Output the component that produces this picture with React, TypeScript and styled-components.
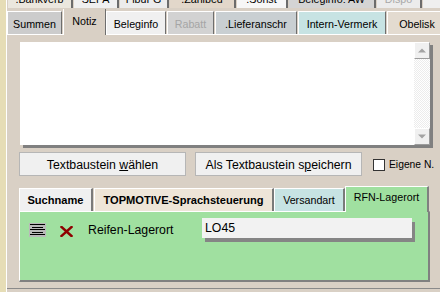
import React from "react";
import styled, { createGlobalStyle } from "styled-components";

type TabDef = {
  label: string;
  width: number;
  bg: string;
  gap?: number;
  selected?: boolean;
  disabled?: boolean;
};

const topTabs: TabDef[] = [
  { label: ".Bankverb", width: 65, bg: "#ebe7de" },
  { label: "SEPA", width: 45, bg: "#f0f0f0" },
  { label: "FibuFG", width: 49, bg: "#ececec" },
  { label: ".Zahlbed", width: 66, bg: "#e2d7ca" },
  { label: ".Sonst", width: 51, bg: "#f7f7f7" },
  { label: "Beleginfo: AW", width: 87, bg: "#d4d4d4" },
  { label: "Dispo", width: 45, bg: "#ececec", disabled: true },
  { label: "", width: 40, bg: "#efefef" },
];

const mainTabs: TabDef[] = [
  { label: "Summen", width: 55, bg: "#cccccc", gap: 1 },
  { label: "Notiz", width: 43, bg: "#d9d0c5", selected: true, gap: 0 },
  { label: "Beleginfo", width: 60, bg: "#f0f0f0", gap: 1 },
  { label: "Rabatt", width: 47, bg: "#d2d2d2", disabled: true, gap: 1 },
  { label: ".Lieferanschr", width: 82, bg: "#c9cfd2", gap: 1 },
  { label: "Intern-Vermerk", width: 88, bg: "#c7e3e3", gap: 1 },
  { label: "Obelisk", width: 60, bg: "#e3dbd0", gap: 0 },
];

const subTabs: (TabDef & { bold?: boolean })[] = [
  { label: "Suchname", width: 74, bg: "#f0f0f0", bold: true, gap: 1 },
  { label: "TOPMOTIVE-Sprachsteuerung", width: 180, bg: "#eee5d8", bold: true, gap: 0 },
  { label: "Versandart", width: 71, bg: "#c7e3e3", gap: 0 },
  { label: "RFN-Lagerort", width: 84, bg: "#a0e0a0", selected: true, gap: 0 },
];

export default function App() {
  return (
    <>
      <GlobalStyle />
      <SRoot>
        <SStrip />
        <SMain>
          <STopRow>
            {topTabs.map((t, i) => (
              <STopTab key={i} $w={t.width} $bg={t.bg} $disabled={t.disabled}>
                {t.label}
              </STopTab>
            ))}
          </STopRow>

          <STabRow>
            {mainTabs.map(t => (
              <STab
                key={t.label}
                $w={t.width}
                $bg={t.bg}
                $gap={t.gap ?? 1}
                $selected={t.selected}
                $disabled={t.disabled}
              >
                {t.label}
              </STab>
            ))}
          </STabRow>

          <SPanel>
            <SNoteBox>
              <SScrollBar>
                <SScrollBtn>
                  <svg width="8" height="5" viewBox="0 0 8 5">
                    <path d="M0 4.5 L4 0.5 L8 4.5 Z" fill="#a3a3a3" />
                  </svg>
                </SScrollBtn>
                <STrack />
                <SScrollBtn>
                  <svg width="8" height="5" viewBox="0 0 8 5">
                    <path d="M0 0.5 L4 4.5 L8 0.5 Z" fill="#a3a3a3" />
                  </svg>
                </SScrollBtn>
              </SScrollBar>
            </SNoteBox>

            <SButtonRow>
              <SButton>
                Textbaustein <u>w</u>ählen
              </SButton>
              <SButton>
                Als Textbaustein s<u>p</u>eichern
              </SButton>
              <SCheckbox />
              <SCheckLabel>Eigene N.</SCheckLabel>
            </SButtonRow>

            <SSubTabRow>
              {subTabs.map(t => (
                <SSubTab
                  key={t.label}
                  $w={t.width}
                  $bg={t.bg}
                  $gap={t.gap ?? 1}
                  $selected={t.selected}
                  $bold={t.bold}
                >
                  {t.label}
                </SSubTab>
              ))}
            </SSubTabRow>

            <SGreenPanel>
              <SFieldRow>
                <SAlignIcon width="17" height="14" viewBox="0 0 17 14">
                  <rect x="0" y="0" width="17" height="14" fill="#b9b9b9" />
                  <rect x="1" y="1" width="15" height="1" fill="#000" />
                  <rect x="3" y="4" width="11" height="1" fill="#000" />
                  <rect x="1" y="6" width="15" height="1" fill="#000" />
                  <rect x="3" y="9" width="11" height="1" fill="#000" />
                  <rect x="1" y="11" width="15" height="1" fill="#000" />
                </SAlignIcon>
                <SDeleteIcon width="13" height="11" viewBox="0 0 13 11">
                  <path
                    d="M1.5 1 L11.5 10 M11.5 1 L1.5 10"
                    stroke="#8e0000"
                    strokeWidth="2.4"
                    strokeLinecap="square"
                  />
                </SDeleteIcon>
                <SFieldLabel>Reifen-Lagerort</SFieldLabel>
                <SInput>LO45</SInput>
              </SFieldRow>
            </SGreenPanel>
          </SPanel>
        </SMain>
      </SRoot>
    </>
  );
}

const GlobalStyle = createGlobalStyle`
  html, body {
    margin: 0;
    padding: 0;
  }
  body {
    font-family: "Liberation Sans", Arial, sans-serif;
    background: #d9d0c5;
    color: #000;
  }
`;

const SRoot = styled.div`
  width: 440px;
  height: 292px;
  display: flex;
  overflow: hidden;
  background: #d9d0c5;
`;

const SStrip = styled.div`
  width: 6px;
  flex: none;
  background: #e6ddb6;
`;

const SMain = styled.div`
  flex: 1;
  display: flex;
  flex-direction: column;
  border-left: 1px solid #ffffff;
  min-width: 0;
`;

const STopRow = styled.div`
  height: 9px;
  flex: none;
  display: flex;
  align-items: flex-start;
  overflow: hidden;
  padding-left: 1px;
`;

const STopTab = styled.div<{ $w: number; $bg: string; $disabled?: boolean }>`
  flex: none;
  box-sizing: border-box;
  width: ${p => p.$w}px;
  height: 20px;
  margin-top: -12px;
  margin-right: 1px;
  padding-top: 4px;
  background: ${p => p.$bg};
  border-right: 2px solid #6c6c6c;
  font-size: 10.7px;
  line-height: 14px;
  text-align: center;
  white-space: nowrap;
  color: ${p => (p.$disabled ? "#a8a8a8" : "#000")};
`;

const STabRow = styled.div`
  height: 25px;
  flex: none;
  display: flex;
  align-items: flex-end;
  white-space: nowrap;
`;

const STab = styled.div<{
  $w: number;
  $bg: string;
  $gap: number;
  $selected?: boolean;
  $disabled?: boolean;
}>`
  flex: none;
  box-sizing: border-box;
  position: relative;
  z-index: ${p => (p.$selected ? 1 : 0)};
  width: ${p => p.$w}px;
  height: ${p => (p.$selected ? 26 : 23)}px;
  margin-right: ${p => p.$gap}px;
  margin-bottom: ${p => (p.$selected ? -1 : 0)}px;
  padding-top: ${p => (p.$selected ? 5 : 5)}px;
  background: ${p => p.$bg};
  border-top: ${p => (p.$selected ? "none" : "1px solid #ffffff")};
  border-left: 1px solid #ffffff;
  border-right: 1px solid #6e6e6e;
  font-size: 10.7px;
  line-height: 14px;
  text-align: center;
  color: ${p => (p.$disabled ? "#a5a5a5" : "#000")};
`;

const SPanel = styled.div`
  height: 255px;
  flex: none;
  box-sizing: border-box;
  border-top: 1px solid #ffffff;
  border-bottom: 1px solid #8a8a8a;
  padding: 7px 0 0 12px;
  display: flex;
  flex-direction: column;
`;

const SNoteBox = styled.div`
  margin-left: 1px;
  width: 410px;
  height: 103px;
  background: #ffffff;
  box-shadow: 3px 3px 0 #808080;
  display: flex;
  justify-content: flex-end;
`;

const SScrollBar = styled.div`
  width: 16px;
  display: flex;
  flex-direction: column;
`;

const SScrollBtn = styled.div`
  height: 17px;
  box-sizing: border-box;
  background: #f0f0f0;
  border: 1px solid;
  border-color: #ffffff #9c9c9c #9c9c9c #ffffff;
  display: flex;
  align-items: center;
  justify-content: center;
`;

const STrack = styled.div`
  flex: 1;
  background-color: #ffffff;
  background-image: repeating-conic-gradient(#ececec 0 25%, #ffffff 0 50%);
  background-size: 2px 2px;
`;

const SButtonRow = styled.div`
  margin-top: 7px;
  display: flex;
  align-items: center;
  gap: 9px;
`;

const SButton = styled.div`
  width: 167px;
  height: 24px;
  box-sizing: border-box;
  border: 1px solid #b6b6b6;
  background: #f0f0f0;
  padding-top: 2px;
  font-size: 12.3px;
  line-height: 20px;
  text-align: center;
  white-space: nowrap;

  u {
    text-underline-offset: 1px;
  }
`;

const SCheckbox = styled.div`
  width: 12px;
  height: 12px;
  box-sizing: border-box;
  margin-left: 2px;
  margin-top: 2px;
  background: #ffffff;
  border: 1px solid #333333;
`;

const SCheckLabel = styled.div`
  margin-left: -5px;
  margin-top: 2px;
  font-size: 10.3px;
  line-height: 14px;
  white-space: nowrap;
`;

const SSubTabRow = styled.div`
  margin-top: 10px;
  height: 25px;
  display: flex;
  align-items: flex-end;
  white-space: nowrap;
`;

const SSubTab = styled.div<{
  $w: number;
  $bg: string;
  $gap: number;
  $selected?: boolean;
  $bold?: boolean;
}>`
  flex: none;
  box-sizing: border-box;
  position: relative;
  z-index: ${p => (p.$selected ? 1 : 0)};
  width: ${p => p.$w}px;
  height: ${p => (p.$selected ? 26 : 23)}px;
  margin-right: ${p => p.$gap}px;
  margin-bottom: ${p => (p.$selected ? -1 : 0)}px;
  padding-top: ${p => (p.$selected ? 3 : 4)}px;
  background: ${p => p.$bg};
  border-top: 1px solid #ffffff;
  border-left: 1px solid #ffffff;
  border-right: ${p => (p.$selected ? "2px solid #808080" : "2px solid #7a7a7a")};
  font-size: ${p => (p.$bold ? 11.1 : 10.7)}px;
  font-weight: ${p => (p.$bold ? 700 : 400)};
  line-height: 14px;
  text-align: center;
`;

const SGreenPanel = styled.div`
  width: 411px;
  height: 71px;
  box-sizing: border-box;
  background: #a0e0a0;
  border-top: 1px solid #ffffff;
  border-left: 1px solid #ffffff;
  border-right: 2px solid #808080;
  border-bottom: 2px solid #808080;
`;

const SFieldRow = styled.div`
  display: flex;
  align-items: flex-start;
  padding: 6px 0 0 9px;
`;

const SAlignIcon = styled.svg`
  flex: none;
  margin-top: 5px;
`;

const SDeleteIcon = styled.svg`
  flex: none;
  margin-top: 8px;
  margin-left: 14px;
`;

const SFieldLabel = styled.div`
  width: 114px;
  margin-left: 15px;
  margin-top: 2px;
  font-size: 12.3px;
  line-height: 20px;
  white-space: nowrap;
`;

const SInput = styled.div`
  width: 210px;
  height: 20px;
  box-sizing: border-box;
  padding-left: 3px;
  background: #f2f2f2;
  box-shadow: 3px 4px 0 #858585;
  font-size: 12.3px;
  line-height: 20px;
`;
